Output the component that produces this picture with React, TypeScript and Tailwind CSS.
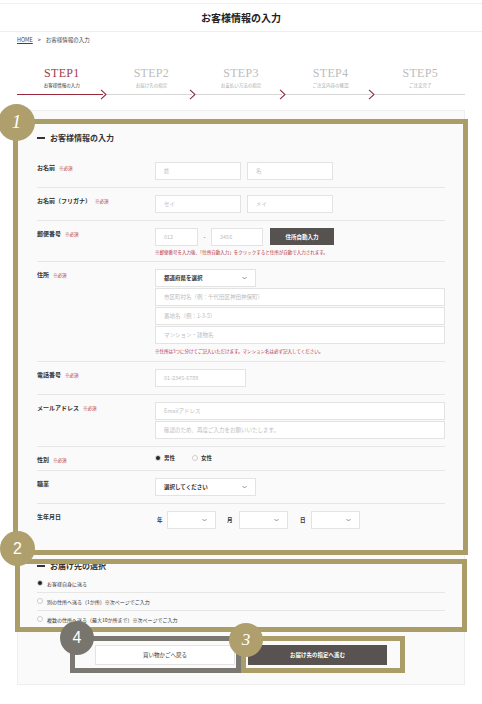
import React from 'react';

const jp = { fontFamily: '"Noto Sans CJK JP", "Noto Sans", sans-serif' };
const serif = { fontFamily: '"Liberation Serif", "Noto Sans CJK JP", serif' };

const steps = [
    { no: 'STEP1', sub: 'お客様情報の入力' },
    { no: 'STEP2', sub: 'お届け先の指定' },
    { no: 'STEP3', sub: 'お支払い方法の指定' },
    { no: 'STEP4', sub: 'ご注文内容の確認' },
    { no: 'STEP5', sub: 'ご注文完了' },
];

const Req = () => <span className="ml-[4px] text-[4.5px] text-[#b2303f] font-normal">※必須</span>;

const Input = ({ ph, w }: { ph: string; w: string }) => (
    <div className={`${w} h-[18px] border border-[#e3e3e3] bg-white flex items-center px-[8px] text-[5.5px] text-[#bdbdbd]`}>{ph}</div>
);

const Select = ({ label, w }: { label: string; w: string }) => (
    <div className={`${w} h-[18px] border border-[#e3e3e3] bg-white flex items-center justify-between px-[8px] text-[5.5px] text-[#333] font-bold`}>
        <span>{label}</span>
        <svg width="5" height="4" viewBox="0 0 5 4"><polyline points="0.5,1 2.5,3 4.5,1" fill="none" stroke="#777" strokeWidth="0.8" /></svg>
    </div>
);

const Row = ({ label, req, children, last }: { label: string; req?: boolean; children: React.ReactNode; last?: boolean }) => (
    <div className={`flex py-[7px] ${last ? '' : 'border-b border-[#e6e6e6]'}`}>
        <div className="w-[118px] shrink-0 pt-[3px] text-[6px] text-[#333] font-bold leading-none">
            {label}
            {req && <Req />}
        </div>
        <div className="flex-1 flex flex-col gap-[1px]">{children}</div>
    </div>
);

const Radio = ({ on }: { on?: boolean }) => (
    <span className="w-[6px] h-[6px] rounded-full border border-[#ccc] bg-white flex items-center justify-center shrink-0">
        {on && <span className="w-[4px] h-[4px] rounded-full bg-[#222]" />}
    </span>
);

const Heading = ({ text }: { text: string }) => (
    <div className="flex items-center gap-[5px] text-[8px] text-[#333] font-bold leading-none">
        <span className="w-[8px] h-[1.5px] bg-[#333]" />
        <span>{text}</span>
    </div>
);

export default function App() {
    return (
        <div className="relative w-[482px] min-h-[704px] bg-white" style={jp}>
            {/* header */}
            <div className="h-[4px] border-b border-[#f0f0f0]" />
            <div className="h-[28px] border-b border-[#eee] flex items-center justify-center text-[10px] font-bold text-[#222]">
                お客様情報の入力
            </div>
            <div className="px-[17px] pt-[4px] flex items-center gap-[5px] text-[5.5px] text-[#444]">
                <span className="underline">HOME</span>
                <span>&gt;</span>
                <span>お客様情報の入力</span>
            </div>

            {/* steps */}
            <div className="mx-[17px] mt-[23px] grid grid-cols-5">
                {steps.map((s, i) => (
                    <div key={s.no} className="flex flex-col">
                        <div className={`text-center text-[12px] font-normal leading-none tracking-[0.3px] ${i === 0 ? 'text-[#a23a4a]' : 'text-[#bcbcbc]'}`} style={serif}>{s.no}</div>
                        <div className={`text-center text-[4.5px] mt-[4px] leading-none ${i === 0 ? 'text-[#333]' : 'text-[#aaa]'}`}>{s.sub}</div>
                        <div className="flex items-center h-[11px] mt-[1px]">
                            <div className={`flex-1 ${i === 0 ? 'h-[1.5px] bg-[#9b2a3c]' : 'h-px bg-[#d6d6d6]'}`} />
                            {i < 4 && (
                                <svg width="7" height="11" viewBox="0 0 7 11" className="-ml-[3px] shrink-0">
                                    <polyline points="1,0.8 6,5.5 1,10.2" fill="none" stroke="#8e2e3e" strokeWidth="1.1" />
                                </svg>
                            )}
                        </div>
                    </div>
                ))}
            </div>

            {/* form card */}
            <div className="mx-[17px] mt-[10px] border border-[#eee] bg-[#fafafa] px-[19px] pt-[23px] pb-[19px]">
                <Heading text="お客様情報の入力" />
                <div className="mt-[13px]">
                    <Row label="お名前" req>
                        <div className="flex gap-[6px]">
                            <Input ph="姓" w="w-[86px]" />
                            <Input ph="名" w="w-[86px]" />
                        </div>
                    </Row>
                    <Row label="お名前（フリガナ）" req>
                        <div className="flex gap-[6px]">
                            <Input ph="セイ" w="w-[86px]" />
                            <Input ph="メイ" w="w-[86px]" />
                        </div>
                    </Row>
                    <Row label="郵便番号" req>
                        <div className="flex items-center">
                            <Input ph="012" w="w-[43px]" />
                            <span className="w-[13px] text-center text-[6px] text-[#555]">-</span>
                            <Input ph="3456" w="w-[52px]" />
                            <div className="ml-[7px] w-[64px] h-[17px] bg-[#565250] text-white text-[5.5px] font-bold flex items-center justify-center">住所自動入力</div>
                        </div>
                        <div className="mt-[3px] text-[4.5px] text-[#b2303f] leading-none">※郵便番号を入力後、「住所自動入力」をクリックすると住所が自動で入力されます。</div>
                    </Row>
                    <Row label="住所" req>
                        <Select label="都道府県を選択" w="w-[101px]" />
                        <Input ph="市区町村名（例：千代田区神田神保町）" w="w-full" />
                        <Input ph="番地名（例：1-3-5）" w="w-full" />
                        <Input ph="マンション・建物名" w="w-full" />
                        <div className="mt-[4px] text-[4.5px] text-[#b2303f] leading-none">※住所は3つに分けてご記入いただけます。マンション名は必ず記入してください。</div>
                    </Row>
                    <Row label="電話番号" req>
                        <Input ph="01-2345-6789" w="w-[91px]" />
                    </Row>
                    <Row label="メールアドレス" req>
                        <Input ph="Emailアドレス" w="w-full" />
                        <Input ph="確認のため、再度ご入力をお願いいたします。" w="w-full" />
                    </Row>
                    <Row label="性別" req>
                        <div className="flex items-center h-[8px] text-[5.5px] text-[#333] font-bold">
                            <Radio on />
                            <span className="ml-[3px]">男性</span>
                            <span className="ml-[17px]"><Radio /></span>
                            <span className="ml-[3px]">女性</span>
                        </div>
                    </Row>
                    <Row label="職業">
                        <Select label="選択してください" w="w-[101px]" />
                    </Row>
                    <Row label="生年月日" last>
                        <div className="flex items-center text-[5.5px] text-[#333] font-bold">
                            <span className="w-[12px] pl-[2px]">年</span>
                            <Select label="" w="w-[49px]" />
                            <span className="w-[23px] pl-[11px]">月</span>
                            <Select label="" w="w-[49px]" />
                            <span className="w-[23px] pl-[12px]">日</span>
                            <Select label="" w="w-[49px]" />
                        </div>
                    </Row>
                </div>

                <div className="mt-[26px]">
                    <Heading text="お届け先の選択" />
                </div>
                <div className="mt-[5px] text-[5px] text-[#333]">
                    {[
                        { t: 'お客様自身に送る', on: true },
                        { t: '別の住所へ送る（1か所）※次ページでご入力' },
                        { t: '複数の住所へ送る（最大10か所まで）※次ページでご入力' },
                    ].map((r) => (
                        <div key={r.t} className="h-[18px] flex items-center gap-[4px] border-b border-[#e6e6e6]">
                            <Radio on={r.on} />
                            <span>{r.t}</span>
                        </div>
                    ))}
                </div>

                <div className="mt-[16px] flex justify-center gap-[13px]">
                    <div className="w-[140px] h-[20px] border border-[#e3e3e3] bg-white flex items-center justify-center text-[5.5px] text-[#333]">買い物かごへ戻る</div>
                    <div className="w-[139px] h-[20px] bg-[#585351] flex items-center justify-center text-[5.5px] text-white font-bold">お届け先の指定へ進む</div>
                </div>
            </div>

            {/* annotation overlays */}
            <div className="absolute left-[13px] top-[119px] w-[455px] h-[436px] border-[5px] border-[#ab9d68] pointer-events-none" />
            <div className="absolute left-[15px] top-[559px] w-[452px] h-[73px] border-[5px] border-[#ab9d68] pointer-events-none" />
            <div className="absolute left-[70px] top-[636px] w-[171px] h-[37px] border-[5px] border-[#7a7870] pointer-events-none" />
            <div className="absolute left-[241px] top-[636px] w-[164px] h-[37px] border-[5px] border-[#ab9d68] pointer-events-none" />

            <div className="absolute left-[-2px] top-[104px] w-[37px] h-[37px] rounded-full bg-[#ae9f6d] flex items-center justify-center text-white text-[19px] italic" style={serif}>1</div>
            <div className="absolute left-[0px] top-[531px] w-[35px] h-[35px] rounded-full bg-[#ae9f6d] flex items-center justify-center text-white text-[16px]" style={{ fontFamily: '"Liberation Sans", sans-serif' }}>2</div>
            <div className="absolute left-[229px] top-[623px] w-[34px] h-[34px] rounded-full bg-[#ae9f6d] flex items-center justify-center text-white text-[17px] italic" style={serif}>3</div>
            <div className="absolute left-[60px] top-[621px] w-[34px] h-[34px] rounded-full bg-[#77756e] flex items-center justify-center text-white text-[16px]" style={{ fontFamily: '"Liberation Sans", sans-serif' }}>4</div>
        </div>
    );
}
